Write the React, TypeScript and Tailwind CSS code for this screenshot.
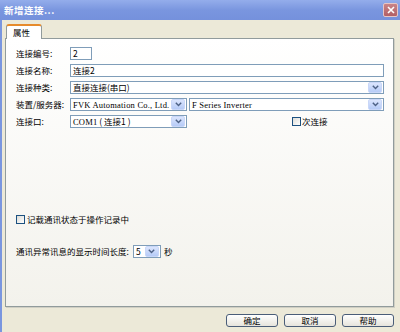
import React from 'react';

const cjk = { fontFamily: '"Noto Sans CJK SC", "Liberation Sans", sans-serif' };
const latin = { fontFamily: '"Liberation Serif", "Noto Sans CJK SC", serif', letterSpacing: '0.2px' };

function Arrow() {
  return (
    <div className="w-[14px] h-[11px] mr-px rounded-[2px] bg-gradient-to-b from-[#dbe5fd] to-[#b6cbf7] border border-[#c9d7f8] flex items-center justify-center shrink-0">
      <svg width="7" height="5" viewBox="0 0 7 5">
        <path d="M0.8 0.8 L3.5 3.6 L6.2 0.8" fill="none" stroke="#4d6185" strokeWidth="1.4" />
      </svg>
    </div>
  );
}

function Select({ children, className = '' }: { children: React.ReactNode; className?: string }) {
  return (
    <div className={`h-[13px] border border-[#7f9db9] bg-white flex items-center ${className}`}>
      <div className="flex-1 min-w-0 pl-[2px] text-[8.5px] leading-[11px] whitespace-nowrap">{children}</div>
      <Arrow />
    </div>
  );
}

function Checkbox() {
  return <div className="w-[9px] h-[9px] border border-[#1c5180] bg-gradient-to-br from-[#dcdcd7] to-white shrink-0" />;
}

function Label({ text }: { text: string }) {
  return (
    <div className="w-[54px] shrink-0 text-[8.5px] leading-[11px] text-black whitespace-nowrap" style={cjk}>
      {text}
    </div>
  );
}

function Button({ text }: { text: string }) {
  return (
    <button
      className="w-[52px] h-[13px] rounded-[3px] border border-[#4a5d78] bg-gradient-to-b from-white to-[#e6e4dc] text-[8.5px] leading-none text-black flex items-center justify-center"
      style={cjk}
    >
      {text}
    </button>
  );
}

export default function App() {
  return (
    <div className="w-[400px] h-[332px] bg-[#ece9d8] flex flex-col overflow-hidden" style={cjk}>
      <div className="h-[20px] shrink-0 bg-gradient-to-b from-[#94adeb] via-[#7a96df] to-[#7591dc] flex items-center justify-between pl-[4px] pr-[2px]">
        <span className="text-white text-[9.5px] font-semibold tracking-[0.5px]">新增连接...</span>
        <div className="w-[15px] h-[14px] rounded-[2px] border border-[#e7c6c6] bg-gradient-to-b from-[#c98488] to-[#b25f66] flex items-center justify-center">
          <svg width="8" height="8" viewBox="0 0 8 8">
            <path d="M1 1 L7 7 M7 1 L1 7" stroke="white" strokeWidth="1.6" />
          </svg>
        </div>
      </div>

      <div className="flex-1 border-l-2 border-[#7a96df] pl-[3px] pr-[6px] flex flex-col">
        <div className="mt-[4px] ml-px flex">
          <div className="relative z-10 -mb-px w-[36px] h-[15px] bg-white border-x border-[#919b9c] border-t-[2px] border-t-[#e68b2c] rounded-t-[3px] pl-[6px] pt-[2px] text-[8.5px] leading-none">
            属性
          </div>
        </div>

        <div className="h-[269px] border border-[#919b9c] bg-gradient-to-b from-white to-[#f3f2ec] shadow-[1px_1px_0_#d0cfc4] pl-[10px] pr-[9px] pt-[8px] flex flex-col">
          <div className="flex items-center h-[13px]">
            <Label text="连接编号:" />
            <div className="w-[22px] h-[13px] border border-[#7f9db9] bg-white pl-[2px] text-[8.5px] leading-[11px]">2</div>
          </div>
          <div className="flex items-center h-[13px] mt-[4px]">
            <Label text="连接名称:" />
            <div className="flex-1 h-[13px] border border-[#7f9db9] bg-white pl-[2px] text-[8.5px] leading-[11px]">连接2</div>
          </div>
          <div className="flex items-center h-[13px] mt-[4px]">
            <Label text="连接种类:" />
            <Select className="flex-1">直接连接(串口)</Select>
          </div>
          <div className="flex items-center h-[13px] mt-[4px]">
            <Label text="装置/服务器:" />
            <Select className="w-[117px]">
              <span style={latin}>FVK Automation Co., Ltd.</span>
            </Select>
            <Select className="flex-1 ml-[2px]">
              <span style={latin}>F Series Inverter</span>
            </Select>
          </div>
          <div className="flex items-center h-[13px] mt-[4px]">
            <Label text="连接口:" />
            <Select className="w-[117px]">
              <span style={latin}>COM1</span> ( 连接1 )
            </Select>
            <div className="ml-[105px] flex items-center gap-px">
              <Checkbox />
              <span className="text-[8.5px] leading-[11px]">次连接</span>
            </div>
          </div>

          <div className="flex items-center gap-[2px] mt-[86px] h-[10px]">
            <Checkbox />
            <span className="text-[8.5px] leading-[11px]">记载通讯状态于操作记录中</span>
          </div>

          <div className="flex items-center mt-[21px] h-[13px]">
            <span className="text-[8.5px] leading-[11px] whitespace-nowrap mr-[4px]">通讯异常讯息的显示时间长度:</span>
            <Select className="w-[28px]">5</Select>
            <span className="ml-[3px] text-[8.5px] leading-[11px]">秒</span>
          </div>
        </div>

        <div className="mt-[7px] flex justify-end gap-[6px]">
          <Button text="确定" />
          <Button text="取消" />
          <Button text="帮助" />
        </div>
      </div>
    </div>
  );
}
